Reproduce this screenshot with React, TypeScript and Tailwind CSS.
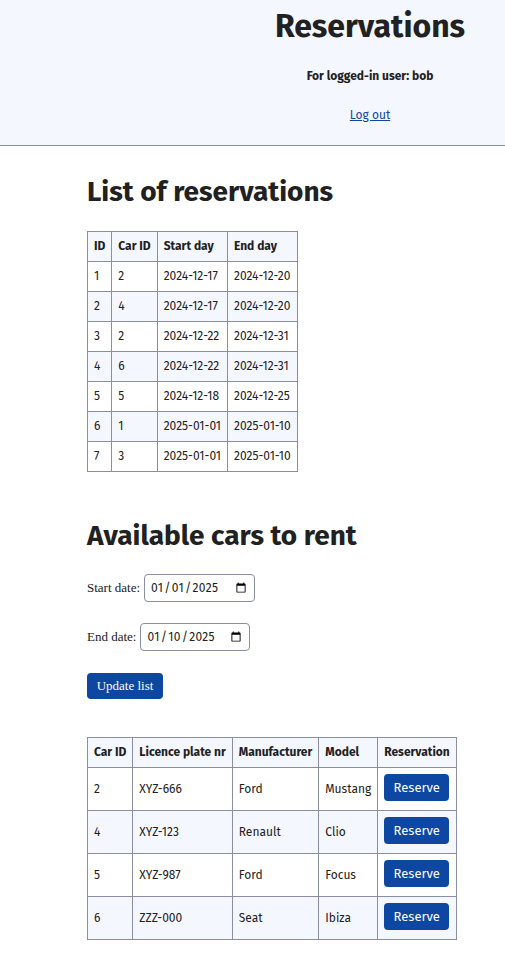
const reservations = [
  { id: 1, carId: 2, start: "2024-12-17", end: "2024-12-20" },
  { id: 2, carId: 4, start: "2024-12-17", end: "2024-12-20" },
  { id: 3, carId: 2, start: "2024-12-22", end: "2024-12-31" },
  { id: 4, carId: 6, start: "2024-12-22", end: "2024-12-31" },
  { id: 5, carId: 5, start: "2024-12-18", end: "2024-12-25" },
  { id: 6, carId: 1, start: "2025-01-01", end: "2025-01-10" },
  { id: 7, carId: 3, start: "2025-01-01", end: "2025-01-10" },
];

const cars = [
  { id: 2, plate: "XYZ-666", maker: "Ford", model: "Mustang" },
  { id: 4, plate: "XYZ-123", maker: "Renault", model: "Clio" },
  { id: 5, plate: "XYZ-987", maker: "Ford", model: "Focus" },
  { id: 6, plate: "ZZZ-000", maker: "Seat", model: "Ibiza" },
];

const th = "border border-[#898ea4] bg-[#f5f7ff] px-[6px] py-[6px] text-left font-bold leading-[17px]";
const td = "border border-[#898ea4] px-[6px] py-[6px] leading-[17px]";

const App = () => {
  return (
    <div className="min-h-screen bg-white text-[#212121] font-['Fira_Sans','Open_Sans',sans-serif]">
      {/* Header */}
      <header className="grid grid-cols-[235px_1fr] h-[146px] bg-[#f5f7ff] border-b border-[#898ea4]">
        <div />
        <div className="flex flex-col items-center pt-[6px]">
          <h1 className="text-[32px] font-bold leading-[40px]">Reservations</h1>
          <p className="mt-[22px] text-[12px] font-bold leading-[16px]">For logged-in user: bob</p>
          <a href="#" className="mt-[23px] text-[12px] leading-[16px] text-[#0d47a1] underline">
            Log out
          </a>
        </div>
      </header>

      <main className="pl-[87px] pt-[28px] pb-[14px]">
        {/* Reservations list */}
        <h2 className="text-[28px] font-bold leading-[36px]">List of reservations</h2>
        <table className="mt-[21px] border-collapse text-[12px]">
          <thead>
            <tr>
              <th className={th}>ID</th>
              <th className={th}>Car ID</th>
              <th className={th}>Start day</th>
              <th className={th}>End day</th>
            </tr>
          </thead>
          <tbody>
            {reservations.map((r, i) => (
              <tr key={r.id} className={i % 2 === 1 ? "bg-[#f5f7ff]" : "bg-white"}>
                <td className={td}>{r.id}</td>
                <td className={td}>{r.carId}</td>
                <td className={td}>{r.start}</td>
                <td className={td}>{r.end}</td>
              </tr>
            ))}
          </tbody>
        </table>

        {/* Available cars */}
        <h2 className="mt-[46px] text-[28px] font-bold leading-[36px]">Available cars to rent</h2>
        <form className="mt-[20px] font-['Liberation_Serif',serif] text-[13px]">
          <div className="flex items-center gap-[4px]">
            <label htmlFor="start">Start date:</label>
            <input
              id="start"
              type="date"
              defaultValue="2025-01-01"
              className="h-[28px] w-[111px] rounded-[4px] border border-[#898ea4] px-[5px] font-['Fira_Sans',sans-serif] text-[12px] tracking-[0.3px]"
            />
          </div>
          <div className="mt-[21px] flex items-center gap-[4px]">
            <label htmlFor="end">End date:</label>
            <input
              id="end"
              type="date"
              defaultValue="2025-01-10"
              className="h-[28px] w-[110px] rounded-[4px] border border-[#898ea4] px-[5px] font-['Fira_Sans',sans-serif] text-[12px] tracking-[0.3px]"
            />
          </div>
          <button
            type="button"
            className="mt-[22px] h-[26px] w-[76px] rounded-[4px] bg-[#0d47a1] text-[13px] text-white"
          >
            Update list
          </button>
        </form>

        <table className="mt-[38px] border-collapse text-[12px]">
          <thead>
            <tr>
              <th className={th}>Car ID</th>
              <th className={th}>Licence plate nr</th>
              <th className={th}>Manufacturer</th>
              <th className={th}>Model</th>
              <th className={th}>Reservation</th>
            </tr>
          </thead>
          <tbody>
            {cars.map((c, i) => (
              <tr key={c.id} className={i % 2 === 1 ? "bg-[#f5f7ff]" : "bg-white"}>
                <td className={td}>{c.id}</td>
                <td className={td}>{c.plate}</td>
                <td className={td}>{c.maker}</td>
                <td className={td}>{c.model}</td>
                <td className={td}>
                  <button
                    type="button"
                    className="mb-[3px] h-[27px] w-[65px] rounded-[4px] bg-[#0d47a1] text-[13px] text-white"
                  >
                    Reserve
                  </button>
                </td>
              </tr>
            ))}
          </tbody>
        </table>
      </main>
    </div>
  );
};

export default App;
